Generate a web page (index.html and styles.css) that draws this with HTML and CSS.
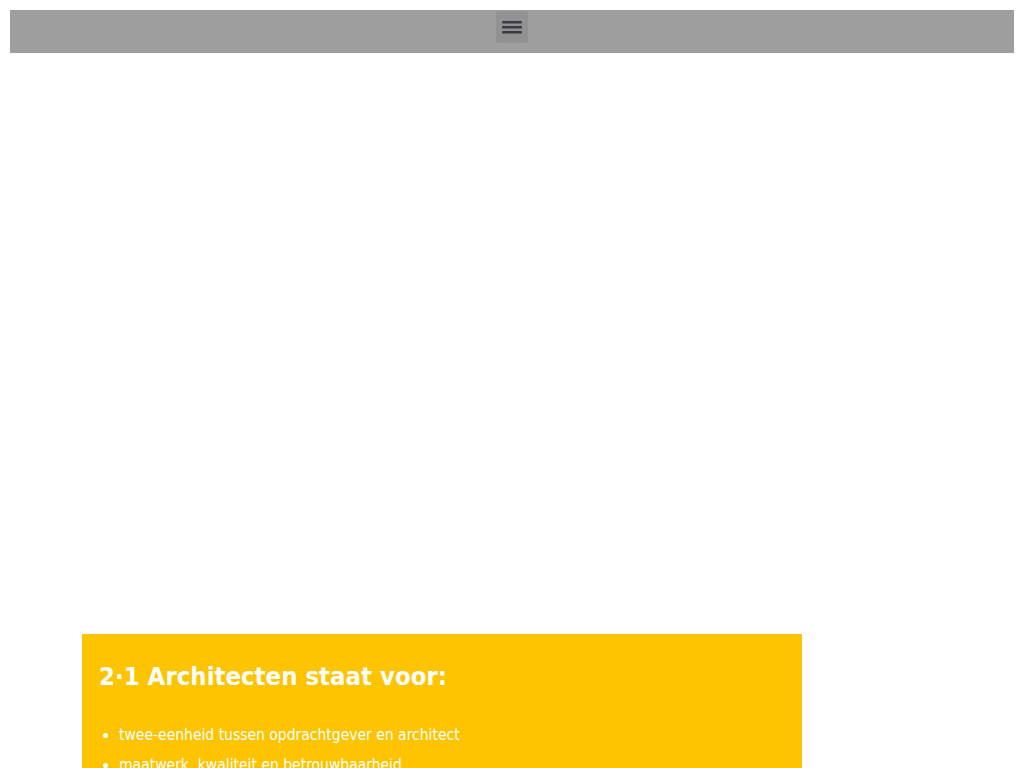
FILE: index.html
```html
<!DOCTYPE html>
<html>
<head>
<meta charset="utf-8">
<link rel="stylesheet" href="styles.css">
</head>
<body>
<div class="page">
  <header class="topbar">
    <button class="menu-btn" aria-label="Menu">
      <svg width="20" height="14" viewBox="0 0 20 14"><rect x="0" y="1" width="20" height="2.4" rx="1" fill="#3a3a42"/><rect x="0" y="6" width="20" height="2.4" rx="1" fill="#3a3a42"/><rect x="0" y="11" width="20" height="2.4" rx="1" fill="#3a3a42"/></svg>
    </button>
  </header>
  <div class="hero"></div>
  <section class="card">
    <h2 class="card-title">2·1 Architecten staat voor:</h2>
    <ul class="card-list">
      <li>twee-eenheid tussen opdrachtgever en architect</li>
      <li>maatwerk, kwaliteit en betrouwbaarheid</li>
    </ul>
  </section>
</div>
</body>
</html>
```
FILE: styles.css
```css
html, body { margin: 0; padding: 0; background: #fff; }
body { font-family: "DejaVu Sans Condensed", "DejaVu Sans", sans-serif; overflow: hidden; height: 768px; }
.page { padding: 10px; }
.topbar {
  height: 43px;
  background: #9e9e9e;
  display: flex;
  justify-content: center;
  align-items: flex-start;
}
.menu-btn {
  margin-top: 1px;
  width: 32px; height: 32px;
  border: 0; border-radius: 3px;
  background: #929292;
  display: flex; align-items: center; justify-content: center;
  padding: 0;
}
.hero { height: 581px; }
.card {
  margin-left: 72px;
  width: 720px;
  background: #fec400;
  color: #fff;
  padding: 24px 17px 20px;
  box-sizing: border-box;
}
.card-title {
  margin: 0 0 26px;
  font-size: 25.5px;
  font-weight: bold;
  line-height: 36px;
}
.card-list {
  margin: 0;
  padding-left: 20px;
  font-size: 15.5px;
  line-height: 30px;
}
```
